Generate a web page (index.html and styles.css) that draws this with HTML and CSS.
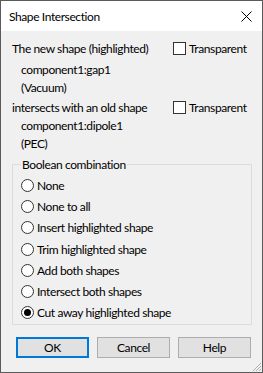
FILE: index.html
```html
<!DOCTYPE html>
<html lang="en">
<head>
    <meta charset="UTF-8">
    <title>Shape Intersection</title>
    <link rel="stylesheet" href="styles.css">
</head>
<body>

<div class="window">
    <div class="titlebar">
        <span class="title">Shape Intersection</span>
        <svg class="close" width="11" height="11" viewBox="0 0 11 11">
            <path d="M0.5 0.5 L10.5 10.5 M10.5 0.5 L0.5 10.5" stroke="#000" stroke-width="1"/>
        </svg>
    </div>

    <div class="content">
        <div class="row first">
            <span class="label">The new shape (highlighted)</span>
            <label class="check"><span class="box"></span>Transparent</label>
        </div>
        <div class="row sub gap">component1:gap1</div>
        <div class="row sub">(Vacuum)</div>
        <div class="row">
            <span class="label">intersects with an old shape</span>
            <label class="check"><span class="box"></span>Transparent</label>
        </div>
        <div class="row sub">component1:dipole1</div>
        <div class="row sub">(PEC)</div>

        <fieldset class="group">
            <legend>Boolean combination</legend>
            <div class="radio"><span class="dot"></span>None</div>
            <div class="radio"><span class="dot"></span>None to all</div>
            <div class="radio"><span class="dot"></span>Insert highlighted shape</div>
            <div class="radio"><span class="dot"></span>Trim highlighted shape</div>
            <div class="radio"><span class="dot"></span>Add both shapes</div>
            <div class="radio"><span class="dot"></span>Intersect both shapes</div>
            <div class="radio"><span class="dot checked"></span>Cut away highlighted shape</div>
        </fieldset>

        <div class="buttons">
            <button class="btn default">OK</button>
            <button class="btn">Cancel</button>
            <button class="btn">Help</button>
        </div>
    </div>

    <svg class="grip" width="12" height="12" viewBox="0 0 12 12">
        <path d="M11 3 L3 11 M11 6 L6 11 M11 9 L9 11" stroke="#b0b0b0" stroke-width="1"/>
    </svg>
</div>

</body>
</html>
```

FILE: styles.css
```css
body {
    margin: 0;
    font-family: Lato, 'Segoe UI', sans-serif;
    font-size: 12px;
    letter-spacing: -0.4px;
    color: #000;
}

.window {
    position: relative;
    width: 263px;
    height: 373px;
    box-sizing: border-box;
    border: 1px solid #5b5b5b;
    background-color: #f0f0f0;
}

.titlebar {
    display: flex;
    align-items: center;
    justify-content: space-between;
    height: 30px;
    padding: 0 10px 0 8px;
    background-color: #fff;
}

.title {
    font-size: 12px;
}

.content {
    padding: 8px 0 0 11px;
}

.row {
    display: flex;
    align-items: center;
    height: 18px;
    margin-top: 2px;
}

.row.first {
    margin-top: 0;
}

.row.sub {
    padding-left: 9px;
    margin-top: 0;
}

.row.gap {
    margin-top: 3px;
}

.label {
    width: 161px;
}

.check {
    display: flex;
    align-items: center;
}

.box {
    width: 11px;
    height: 11px;
    border: 1px solid #333;
    background-color: #fff;
    margin-right: 3px;
}

.group {
    margin: 5px 0 0 0;
    padding: 3px 0 6px 8px;
    width: 240px;
    box-sizing: border-box;
    height: 168px;
    border: 1px solid #dcdcdc;
    border-radius: 0;
}

.group legend {
    padding: 0 1px;
    margin-left: 0;
}

.radio {
    display: flex;
    align-items: center;
    height: 21.2px;
}

.dot {
    width: 11px;
    height: 11px;
    border: 1px solid #333;
    border-radius: 50%;
    background-color: #fff;
    margin-right: 3px;
    display: flex;
    align-items: center;
    justify-content: center;
}

.dot.checked::after {
    content: '';
    width: 7px;
    height: 7px;
    border-radius: 50%;
    background-color: #000;
}

.buttons {
    display: flex;
    gap: 8px;
    margin: 12px 0 0 4px;
}

.btn {
    width: 73px;
    height: 21px;
    font-family: inherit;
    font-size: 12px;
    letter-spacing: inherit;
    background-color: #e1e1e1;
    border: 1px solid #adadad;
    padding: 0;
}

.btn.default {
    border: 2px solid #0078d7;
}

.grip {
    position: absolute;
    right: 0;
    bottom: 0;
}
```
